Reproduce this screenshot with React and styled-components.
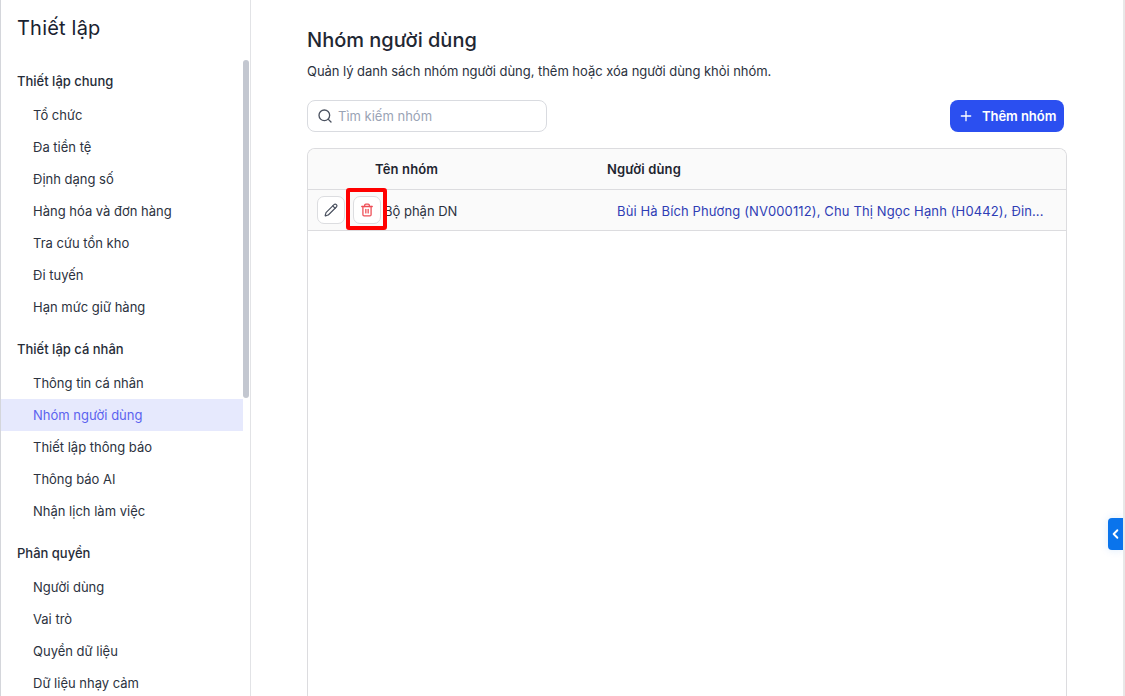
import React from "react";
import styled, { createGlobalStyle } from "styled-components";
import { Search, Plus, Pencil, Trash2, ChevronLeft } from "lucide-react";

const GlobalStyle = createGlobalStyle`
  html, body {
    margin: 0;
    height: 100%;
    overflow: hidden;
    background: #fff;
    font-family: Inter, "Noto Sans", sans-serif;
    color: #1f2530;
  }
  #root { height: 100%; }
  * { box-sizing: border-box; }
`;

const Page = styled.div`
  display: flex;
  height: 696px;
  width: 1125px;
  position: relative;
  overflow: hidden;
  border-left: 1px solid #d4d6db;
  border-right: 2px solid #e8e8e8;
`;

const Sidebar = styled.aside`
  position: relative;
  flex: 0 0 250px;
  height: 100%;
  overflow: hidden;
  border-right: 1px solid #e2e3e6;
`;

const SideTitle = styled.h2`
  margin: 0;
  padding: 14px 0 0 16px;
  height: 63px;
  font-size: 20px;
  line-height: 28px;
  font-weight: 400;
  letter-spacing: 0.2px;
  color: #1a2230;
`;

const Group = styled.div`
  margin-bottom: 8px;
`;

const GroupTitle = styled.div`
  height: 36px;
  padding-left: 16px;
  display: flex;
  align-items: center;
  font-size: 13px;
  font-weight: 500;
  color: #262c38;
`;

const Item = styled.div`
  width: 242px;
  height: 32px;
  padding-left: 32px;
  display: flex;
  align-items: center;
  font-size: 13px;
  color: ${(p) => (p.$active ? "#5b63ef" : "#2c323e")};
  background: ${(p) => (p.$active ? "#e6e9fd" : "transparent")};
`;

const Thumb = styled.div`
  position: absolute;
  top: 60px;
  right: 1px;
  width: 6px;
  height: 338px;
  border-radius: 3px;
  background: #c3c7d0;
`;

const Main = styled.main`
  flex: 1;
  min-width: 0;
  padding: 28px 56px 0 56px;
  display: flex;
  flex-direction: column;
`;

const Heading = styled.h1`
  margin: 0;
  font-size: 20px;
  line-height: 24px;
  font-weight: 500;
  color: #1f2733;
`;

const Sub = styled.p`
  margin: 9px 0 0;
  font-size: 13px;
  line-height: 20px;
  letter-spacing: -0.04px;
  color: #2c323e;
`;

const Toolbar = styled.div`
  display: flex;
  align-items: center;
  justify-content: space-between;
  margin-top: 19px;
  padding-right: 3px;
`;

const SearchBox = styled.div`
  width: 240px;
  height: 32px;
  display: flex;
  align-items: center;
  gap: 5px;
  padding: 0 9px;
  border: 1px solid #d9dbe0;
  border-radius: 8px;
  color: #4b5260;
`;

const Placeholder = styled.span`
  font-size: 13px;
  color: #9aa3b5;
`;

const AddButton = styled.button`
  width: 114px;
  height: 32px;
  display: flex;
  align-items: center;
  gap: 8px;
  padding: 0 0 0 8px;
  border: 0;
  border-radius: 8px;
  background: #2b4ff0;
  color: #fff;
  font-family: inherit;
  font-size: 13px;
  font-weight: 600;
  letter-spacing: -0.05px;
`;

const Table = styled.div`
  margin-top: 16px;
  flex: 1;
  border: 1px solid #dcdcdf;
  border-bottom: 0;
  border-radius: 8px 8px 0 0;
  overflow: hidden;
`;

const Row = styled.div`
  height: 41px;
  display: grid;
  grid-template-columns: ${(p) => (p.$head ? "67px 232px 1fr" : "76px 233px 1fr")};
  align-items: center;
  background: #fafafa;
  border-bottom: 1px solid #dcdcdf;
`;

const HeadCell = styled.div`
  font-size: 13px;
  font-weight: 600;
  letter-spacing: 0.15px;
  color: #1f2530;
`;

const Actions = styled.div`
  display: flex;
  gap: 8px;
  padding-left: 9px;
`;

const IconButton = styled.button`
  position: relative;
  width: 28px;
  height: 28px;
  display: flex;
  align-items: center;
  justify-content: center;
  padding: 0;
  border: 1px solid #dcdde0;
  border-radius: 7px;
  background: #fff;
  color: ${(p) => (p.$danger ? "#ee4d55" : "#4b5260")};
`;

const Highlight = styled.span`
  position: absolute;
  top: -9px;
  left: -8px;
  width: 41px;
  height: 42px;
  border: 4px solid #ff0000;
  border-radius: 3px;
  pointer-events: none;
`;

const NameCell = styled.div`
  font-size: 13px;
  padding-top: 1px;
  color: #2c323e;
`;

const UsersCell = styled.div`
  font-size: 13px;
  padding-top: 1px;
  letter-spacing: 0.13px;
  color: #2f3db5;
  white-space: nowrap;
`;

const DrawerTab = styled.div`
  position: absolute;
  right: 0;
  top: 518px;
  width: 15px;
  height: 32px;
  display: flex;
  align-items: center;
  justify-content: center;
  border-radius: 4px 0 0 4px;
  background: #0a74ec;
  color: #fff;
  box-shadow: 0 0 8px rgba(10, 116, 236, 0.15);
`;

const groups = [
  {
    title: "Thiết lập chung",
    items: ["Tổ chức", "Đa tiền tệ", "Định dạng số", "Hàng hóa và đơn hàng", "Tra cứu tồn kho", "Đi tuyến", "Hạn mức giữ hàng"],
  },
  {
    title: "Thiết lập cá nhân",
    items: ["Thông tin cá nhân", "Nhóm người dùng", "Thiết lập thông báo", "Thông báo AI", "Nhận lịch làm việc"],
  },
  {
    title: "Phân quyền",
    items: ["Người dùng", "Vai trò", "Quyền dữ liệu", "Dữ liệu nhạy cảm"],
  },
];

export default function App() {
  return (
    <Page>
      <GlobalStyle />
      <Sidebar>
        <SideTitle>Thiết lập</SideTitle>
        {groups.map((g) => (
          <Group key={g.title}>
            <GroupTitle>{g.title}</GroupTitle>
            {g.items.map((it) => (
              <Item key={it} $active={it === "Nhóm người dùng"}>
                {it}
              </Item>
            ))}
          </Group>
        ))}
        <Thumb />
      </Sidebar>
      <Main>
        <Heading>Nhóm người dùng</Heading>
        <Sub>Quản lý danh sách nhóm người dùng, thêm hoặc xóa người dùng khỏi nhóm.</Sub>
        <Toolbar>
          <SearchBox>
            <Search size={16} strokeWidth={2} />
            <Placeholder>Tìm kiếm nhóm</Placeholder>
          </SearchBox>
          <AddButton>
            <Plus size={16} strokeWidth={2} />
            Thêm nhóm
          </AddButton>
        </Toolbar>
        <Table>
          <Row $head>
            <div />
            <HeadCell>Tên nhóm</HeadCell>
            <HeadCell>Người dùng</HeadCell>
          </Row>
          <Row>
            <Actions>
              <IconButton>
                <Pencil size={14} strokeWidth={2} />
              </IconButton>
              <IconButton $danger>
                <Trash2 size={14} strokeWidth={2.2} />
                <Highlight />
              </IconButton>
            </Actions>
            <NameCell>Bộ phận DN</NameCell>
            <UsersCell>Bùi Hà Bích Phương (NV000112), Chu Thị Ngọc Hạnh (H0442), Đin...</UsersCell>
          </Row>
        </Table>
      </Main>
      <DrawerTab>
        <ChevronLeft size={16} strokeWidth={3} />
      </DrawerTab>
    </Page>
  );
}
